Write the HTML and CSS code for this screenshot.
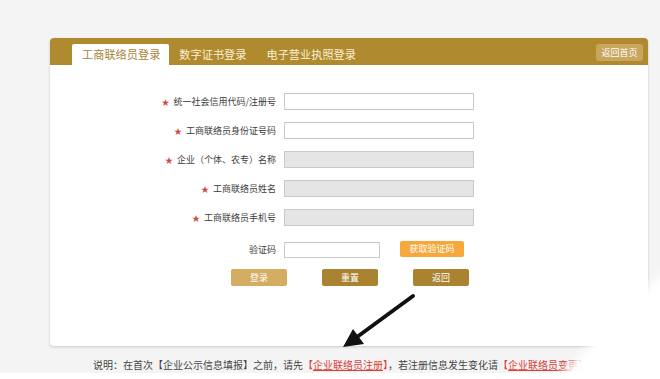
FILE: index.html
```html
<!DOCTYPE html>
<html lang="zh-CN">
<head>
<meta charset="utf-8">
<title>工商联络员登录</title>
<link rel="stylesheet" href="styles.css">
</head>
<body>
<div class="page">
  <div class="card">
    <div class="card-head">
      <div class="tabs">
        <div class="tab active">工商联络员登录</div>
        <div class="tab">数字证书登录</div>
        <div class="tab">电子营业执照登录</div>
      </div>
      <div class="home-btn">返回首页</div>
    </div>
    <div class="form">
      <div class="row">
        <div class="label"><span class="star">★</span>统一社会信用代码/注册号</div>
        <div class="input"></div>
      </div>
      <div class="row">
        <div class="label"><span class="star">★</span>工商联络员身份证号码</div>
        <div class="input"></div>
      </div>
      <div class="row">
        <div class="label"><span class="star">★</span>企业（个体、农专）名称</div>
        <div class="input disabled"></div>
      </div>
      <div class="row">
        <div class="label"><span class="star">★</span>工商联络员姓名</div>
        <div class="input disabled"></div>
      </div>
      <div class="row">
        <div class="label"><span class="star">★</span>工商联络员手机号</div>
        <div class="input disabled"></div>
      </div>
      <div class="row captcha-row">
        <div class="label">验证码</div>
        <div class="input short"></div>
        <div class="btn btn-orange">获取验证码</div>
      </div>
      <div class="actions">
        <div class="btn btn-light">登录</div>
        <div class="btn btn-dark">重置</div>
        <div class="btn btn-dark">返回</div>
      </div>
    </div>
  </div>
  <p class="note">说明：在首次【企业公示信息填报】之前，请先<span class="red">【<u>企业联络员注册</u>】</span>，若注册信息发生变化请<span class="red">【<u>企业联络员变更</u>】</span></p>
  <div class="bottom-strip"></div>
  <svg class="arrow" width="660" height="379" viewBox="0 0 660 379">
    <line x1="413" y1="296" x2="357" y2="337" stroke="#111" stroke-width="4" stroke-linecap="round"/>
    <polygon points="343,347 353,329 364,344" fill="#111"/>
  </svg>
  <div class="fade"></div>
</div>
</body>
</html>
```

FILE: styles.css
```css
* { box-sizing: border-box; }
html, body {
  margin: 0;
  padding: 0;
  width: 660px;
  height: 379px;
  overflow: hidden;
  background: #f4f4f4;
  font-family: "Noto Sans CJK SC", "Noto Sans", sans-serif;
}
.page {
  position: relative;
  width: 660px;
  height: 379px;
  padding-top: 38px;
}
.card {
  margin-left: 50px;
  width: 598px;
  height: 308px;
  background: #fff;
  border-radius: 4px;
  box-shadow: 0 1px 3px rgba(0,0,0,0.18);
  overflow: hidden;
}
.card-head {
  height: 27px;
  background: #b08a2f;
  display: flex;
  justify-content: space-between;
  align-items: flex-start;
  padding: 6px 5px 0 22px;
}
.tabs { display: flex; }
.tab {
  height: 21px;
  padding: 0 10px;
  font-size: 11.2px;
  line-height: 21px;
  color: #fbf1d6;
  white-space: nowrap;
}
.tab.active {
  background: #fff;
  color: #a8843a;
  border-radius: 2px 2px 0 0;
  padding: 0 9px 0 10px;
}
.home-btn {
  width: 47px;
  height: 17px;
  background: #c9a55e;
  color: #fff;
  font-size: 9px;
  line-height: 17px;
  text-align: center;
  border-radius: 3px;
}
.form {
  padding: 28px 0 0 100px;
  display: flex;
  flex-direction: column;
  gap: 12px;
}
.row {
  display: flex;
  align-items: center;
  gap: 8px;
  height: 17px;
}
.label {
  width: 126px;
  text-align: right;
  font-size: 9px;
  color: #3c3c3c;
  white-space: nowrap;
}
.star {
  color: #cf4a40;
  font-size: 8px;
  margin-right: 4px;
}
.input {
  width: 190px;
  height: 17px;
  border: 1px solid #c9c9c9;
  background: #fff;
}
.input.disabled { background: #e5e5e5; }
.input.short { width: 96px; height: 16px; }
.captcha-row { margin-top: 3px; }
.btn {
  height: 16px;
  color: #fff;
  font-size: 9px;
  line-height: 16px;
  text-align: center;
  border-radius: 2px;
}
.btn-orange {
  margin-left: 12px;
  width: 64px;
  background: #f6a93a;
  margin-top: -2px;
}
.actions {
  display: flex;
  gap: 35px;
  padding-left: 81px;
  margin-top: -1px;
}
.actions .btn { width: 56px; height: 17px; line-height: 17px; }
.btn-light { background: #d4ad62; }
.btn-dark { background: #a98330; }
.note {
  margin: 0;
  padding: 12px 0 0 93px;
  font-size: 10px;
  line-height: 14px;
  color: #444;
  white-space: nowrap;
}
.red { color: #d9413a; }
.red u { text-decoration-thickness: 1px; text-underline-offset: 1px; }
.bottom-strip {
  height: 20px;
  background: #fff;
  margin-top: 1px;
}
.arrow {
  position: absolute;
  left: 0;
  top: 0;
}
.fade {
  position: absolute;
  right: 0;
  bottom: 0;
  width: 120px;
  height: 120px;
  background: linear-gradient(135deg, rgba(255,255,255,0) 53%, rgba(255,255,255,0.95) 60%, #fff 64%);
}
```
